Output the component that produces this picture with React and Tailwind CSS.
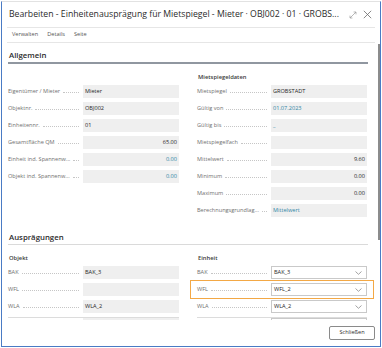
import React from "react";

const Chevron = () => (
  <svg width="7" height="4" viewBox="0 0 7 4" className="shrink-0">
    <path d="M0.5 0.5 L3.5 3.3 L6.5 0.5" fill="none" stroke="#8a8a8a" strokeWidth="0.8" />
  </svg>
);

const Row = ({ label, value, right, color, dropdown, labelW = "w-[75px]", highlight }) => (
  <div className="relative flex items-center h-[17px]">
    <div className={`${labelW} shrink-0 flex items-center pr-[4px]`}>
      <span className="text-[5.6px] leading-none text-[#707070] whitespace-nowrap">{label}</span>
      <span className="flex-1 ml-[3px] min-w-[3px] border-t border-dotted border-[#c6c6c6] mt-[2px]" />
    </div>
    {dropdown ? (
      <div className="w-[96px] h-[13px] bg-white border border-[#c9c9c9] flex items-center justify-between pl-[2px] pr-[4px]">
        <span className="text-[5.6px] leading-none text-[#262626]">{value}</span>
        <Chevron />
      </div>
    ) : (
      <div
        className={`w-[96px] h-[13px] bg-[#efefef] flex items-center px-[2px] ${right ? "justify-end" : ""}`}
      >
        <span className="text-[5.6px] leading-none" style={{ color: color || "#262626" }}>
          {value}
        </span>
      </div>
    )}
    {highlight && (
      <div className="absolute left-[-7px] right-[-7px] top-[-1px] bottom-[-1px] border-[1.5px] border-[#f3a845]" />
    )}
  </div>
);

export default function App() {
  const teal = "#2f86a6";
  return (
    <div className="w-[382px] h-[348px] bg-white pt-[1px] pl-[1px] font-['Open_Sans',sans-serif]">
      <div className="w-[380px] h-[346px] border-l border-r border-b border-l-[#4a7bc4] border-r-[#4a7bc4] border-b-[#4a7bc4] border-t border-t-[#e2e2e2] flex flex-col overflow-hidden">
        {/* Title */}
        <div className="h-[25px] flex items-center pl-[7px] pr-[8px] shrink-0">
          <span className="text-[8.7px] leading-none text-[#2b2b2b] whitespace-nowrap flex-1">
            Bearbeiten - Einheitenausprägung für Mietspiegel - Mieter · OBJ002 · 01 · GROBS...
          </span>
          <svg width="8" height="8" viewBox="0 0 8 8" className="mr-[6px]">
            <path d="M1 7 L7 1 M4.6 1 H7 V3.4 M1 4.6 V7 H3.4" fill="none" stroke="#9a9a9a" strokeWidth="0.7" />
          </svg>
          <svg width="9" height="9" viewBox="0 0 9 9">
            <path d="M0.8 0.8 L8.2 8.2 M8.2 0.8 L0.8 8.2" fill="none" stroke="#6a6a6a" strokeWidth="0.8" />
          </svg>
        </div>
        <div className="mx-[5px] h-px bg-[#e6e6e6] shrink-0" />
        {/* Menu */}
        <div className="h-[14px] flex items-center gap-[9px] pl-[10px] shrink-0">
          <span className="text-[5.6px] leading-none text-[#555]">Verwalten</span>
          <span className="text-[5.6px] leading-none text-[#555]">Details</span>
          <span className="text-[5.6px] leading-none text-[#555]">Seite</span>
        </div>
        <div className="mx-[5px] h-px bg-[#e6e6e6] shrink-0" />
        {/* Scroll area */}
        <div className="relative h-[277px] shrink-0 overflow-hidden pl-[6px] pr-[12px]">
          <div className="absolute right-0 top-[1px] w-[2px] h-[196px] bg-[#8c8c8c]" />
          {/* Allgemein */}
          <div className="pt-[7px] border-b-2 border-[#9097a0]">
            <div className="h-[12px] flex items-center text-[7.8px] font-semibold text-[#2b2b2b] pl-[1px]">
              Allgemein
            </div>
          </div>
          <div className="flex gap-[18px] pt-[7px]">
            <div className="w-[171px]">
              <div className="h-[12px]" />
              <Row label="Eigentümer / Mieter" value="Mieter" />
              <Row label="Objektnr." value="OBJ002" />
              <Row label="Einheitennr." value="01" />
              <Row label="Gesamtfläche QM" value="65.00" right />
              <Row label="Einheit ind. Spannenw..." value="0.00" right color={teal} />
              <Row label="Objekt ind. Spannenw..." value="0.00" right color={teal} />
            </div>
            <div className="w-[170px]">
              <div className="h-[12px] flex items-center text-[5.8px] font-semibold text-[#3a3a3a] pl-[1px]">
                Mietspiegeldaten
              </div>
              <Row labelW="w-[74px]" label="Mietspiegel" value="GROBSTADT" />
              <Row labelW="w-[74px]" label="Gültig von" value="01.07.2023" color={teal} />
              <Row labelW="w-[74px]" label="Gültig bis" value="_" color={teal} />
              <Row labelW="w-[74px]" label="Mietspiegelfach" value="" />
              <Row labelW="w-[74px]" label="Mittelwert" value="9.60" right />
              <Row labelW="w-[74px]" label="Minimum" value="0.00" right />
              <Row labelW="w-[74px]" label="Maximum" value="0.00" right />
              <Row labelW="w-[74px]" label="Berechnungsgrundlag..." value="Mittelwert" color={teal} />
            </div>
          </div>
          {/* Ausprägungen */}
          <div className="pt-[13px] border-b border-[#dadada]">
            <div className="h-[12px] flex items-center text-[7.8px] font-semibold text-[#2b2b2b] pl-[1px]">
              Ausprägungen
            </div>
          </div>
          <div className="flex gap-[18px] pt-[7px]">
            <div className="w-[171px]">
              <div className="h-[12px] flex items-center text-[5.8px] font-semibold text-[#3a3a3a] pl-[1px]">
                Objekt
              </div>
              <Row label="BAK" value="BAK_3" />
              <Row label="WFL" value="" />
              <Row label="WLA" value="WLA_2" />
              <div className="flex mt-[2px] border-t border-[#dcdcdc]">
                <div className="w-[75px]" />
                <div className="w-[96px] h-[6px] bg-[#efefef]" />
              </div>
            </div>
            <div className="w-[170px]">
              <div className="h-[12px] flex items-center text-[5.8px] font-semibold text-[#3a3a3a] pl-[1px]">
                Einheit
              </div>
              <Row labelW="w-[74px]" label="BAK" value="BAK_3" dropdown />
              <Row labelW="w-[74px]" label="WFL" value="WFL_2" dropdown highlight />
              <Row labelW="w-[74px]" label="WLA" value="WLA_2" dropdown />
              <div className="flex mt-[2px] border-t border-[#dcdcdc]">
                <div className="w-[74px]" />
                <div className="w-[96px] h-[6px] bg-white border border-[#c9c9c9]" />
              </div>
            </div>
          </div>
        </div>
        {/* Footer */}
        <div className="flex-1 flex items-center justify-end pr-[5px] pb-[1px]">
          <div className="w-[46px] h-[14px] border border-[#8a8a8a] rounded-[2px] flex items-center justify-center text-[5.6px] leading-none text-[#2b2b2b]">
            Schließen
          </div>
        </div>
      </div>
    </div>
  );
}
